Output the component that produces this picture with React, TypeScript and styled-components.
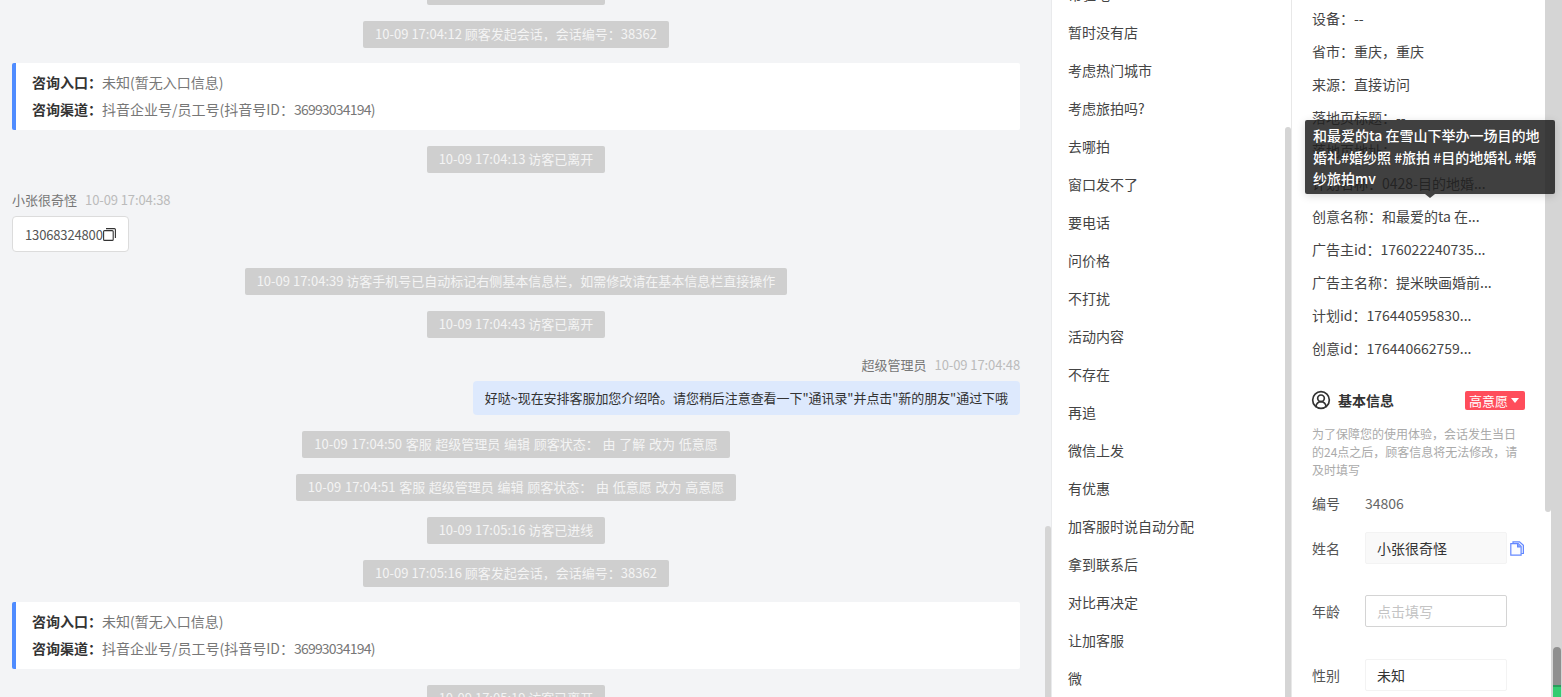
import React from "react";
import styled, { createGlobalStyle } from "styled-components";
import { CircleUserRound } from "lucide-react";

const Global = createGlobalStyle`
  html, body { margin: 0; padding: 0; background: #f3f4f6; overflow: hidden; }
  * { box-sizing: border-box; }
  body { font-family: "Noto Sans CJK SC", "Noto Sans", sans-serif; font-size: 14px; color: #333; }
`;

const Page = styled.div`
  position: relative; display: flex; width: 1562px; height: 697px; overflow: hidden; background: #f3f4f6;
`;
const Chat = styled.main`
  flex: 0 0 1045px; height: 719px; overflow: hidden; padding: 0 25px 0 12px;
  display: flex; flex-direction: column; gap: 16px; margin-top: -22px;
`;
const Notice = styled.div<{ $wide?: boolean }>`
  align-self: center; height: 27px; padding: 0 12px; line-height: 26px; flex: none;
  background: #cfcfcf; color: #f4f4f4; border-radius: 2px; white-space: nowrap; font-size: 13px;
  word-spacing: ${p => p.$wide ? "0.8px" : "0"};
`;
const Card = styled.div`
  flex: none; height: 67px; background: #fff; border-left: 4px solid #4f8cff; border-radius: 2px;
  padding: 6px 16px 8px; display: flex; flex-direction: column; justify-content: center; gap: 5px; margin: -1px 0 0;
`;
const CardLine = styled.div`
  line-height: 22px; color: #777; font-size: 14px; white-space: nowrap;
  b { color: #333; font-weight: 700; }
`;
const Digits = styled.span`letter-spacing: -0.8px;`;
const Message = styled.div<{ $mine?: boolean }>`
  flex: none; display: flex; flex-direction: column; gap: 7px; align-items: ${p => p.$mine ? "flex-end" : "flex-start"};
  margin-top: 1px;
`;
const Meta = styled.div`
  line-height: 19px; color: #777; font-size: 13px; white-space: nowrap;
  span { color: #bbb; margin-left: 8px; font-size: 13px; letter-spacing: -0.1px; }
`;
const PhoneBubble = styled.div`
  display: flex; align-items: center; height: 36px; padding: 0 12px; background: #fff;
  border: 1px solid #dcdcdc; border-radius: 4px; color: #555; font-size: 13px; letter-spacing: -0.15px;
`;
const TextBubble = styled.div`
  height: 34px; line-height: 34px; padding: 0 12px; background: #dde9fd; color: #333; border-radius: 4px;
  font-size: 13px; white-space: nowrap; letter-spacing: -0.06px;
`;
const ScrollBar = styled.div<{ $top?: number; $h?: number }>`
  flex: 0 0 6px; align-self: flex-start; margin-top: ${p => p.$top ?? 0}px; height: ${p => p.$h ?? 697}px;
  background: #d5d5d5; border-radius: 3px;
`;
const Gutter = styled.div`flex: 0 0 1px; background: #e9eaec;`;
const Middle = styled.section`
  flex: 0 0 240px; height: 697px; display: flex; background: #fff; border-right: 1px solid #e8e8e8;
`;
const Replies = styled.ul`
  flex: 1; list-style: none; margin: -25px 0 0; padding: 0 0 0 16px; overflow: hidden;
`;
const Reply = styled.li`height: 38px; line-height: 38px; color: #444; font-size: 14px; white-space: nowrap;`;
const Right = styled.section`flex: 0 0 259px; height: 697px; display: flex; background: #fff;`;
const Info = styled.div`flex: 1; padding: 2px 20px 0; overflow: hidden;`;
const Row = styled.div`height: 33px; line-height: 33px; color: #444; font-size: 14px; white-space: nowrap;`;
const Header = styled.div`
  display: flex; align-items: center; height: 20px; margin-top: 25px;
  svg { margin-left: -1px; margin-right: -1px; }
`;
const Title = styled.h3`margin: 0 0 0 8px; flex: 1; font-size: 14px; font-weight: 700; color: #333;`;
const Tag = styled.div`
  width: 60px; height: 19px; background: #ff4d5b; color: #fff; border-radius: 2px; line-height: 19px; font-size: 13px;
  display: flex; align-items: center; padding-left: 4px; gap: 3px;
  &::after { content: ""; border: 4px solid transparent; border-top: 5px solid #fff; border-bottom: 0; }
`;
const Tip = styled.p`margin: 15px 0 0; width: 212px; font-size: 12px; line-height: 18px; color: #aaa;`;
const Line = styled.div<{ $gap: number }>`display: flex; align-items: center; font-size: 14px; margin-top: ${p => p.$gap}px;`;
const Label = styled.div`flex: 0 0 53px; color: #555;`;
const Value = styled.div`color: #666; line-height: 20px;`;
const Field = styled.div<{ $kind: "filled" | "empty" | "plain" }>`
  width: 142px; height: 32px; line-height: 30px; padding: 0 11px; border-radius: 2px; font-size: 14px;
  background: ${p => p.$kind === "filled" ? "#f9f9f9" : "#fff"};
  border: 1px solid ${p => p.$kind === "empty" ? "#d4d4d4" : "#f3f3f3"};
  color: ${p => p.$kind === "empty" ? "#c4c4c4" : "#333"};
`;
const CopyBox = styled.div`margin-left: 3px; display: flex;`;
const Outer = styled.div`
  flex: 0 0 11px; height: 697px; background: #d5d5d5; display: flex; flex-direction: column; justify-content: flex-end; align-items: center;
`;
const OuterThumb = styled.div`
  width: 8px; height: 50px; border-radius: 4px 4px 0 0; overflow: hidden;
  background: linear-gradient(#8f8f8f 0 38px, #2a9d5c 38px 40px, #34cc70 40px);
`;
const Tooltip = styled.div`
  position: absolute; left: 1305px; top: 120px; width: 250px; height: 74px; padding: 5px 8px;
  background: rgba(30,30,30,.85); color: #fff; border-radius: 2px; font-size: 14px; line-height: 21.5px; font-weight: 500;
  box-shadow: 0 2px 8px rgba(0,0,0,.15);
  &::after { content: ""; position: absolute; left: 120px; bottom: -4px; border: 5px solid transparent; border-top: 4px solid #404040; border-bottom: 0; }
`;

const Entry = () => (
  <Card>
    <CardLine><b>咨询入口：</b>未知(暂无入口信息)</CardLine>
    <CardLine><b>咨询渠道：</b>抖音企业号/员工号(抖音号ID：<Digits>36993034194)</Digits></CardLine>
  </Card>
);

const DupIcon = () => (
  <svg width="13" height="13" viewBox="0 0 13 13" fill="none" stroke="#333" strokeWidth="1.1">
    <rect x="0.6" y="2.6" width="9.6" height="9.8" rx="1" />
    <path d="M3 .6h8.4a1 1 0 0 1 1 1V10" />
  </svg>
);
const BlueCopy = () => (
  <svg width="14" height="15" viewBox="0 0 14 15" fill="none" stroke="#6488ff" strokeWidth="1.2">
    <path d="M3 2V.8h6.5l3.9 3.4V12.5H11" fill="#eef2ff" />
    <path d="M.8 2.6h7.4l2.9 3v8.6H.8z" fill="#fbfcff" />
    <path d="M7.6 2.8v3.2h3.2" fill="#8aa6ff" />
  </svg>
);

const replies = ["常驻地","暂时没有店","考虑热门城市","考虑旅拍吗?","去哪拍","窗口发不了","要电话","问价格","不打扰","活动内容","不存在","再追","微信上发","有优惠","加客服时说自动分配","拿到联系后","对比再决定","让加客服","微"];
const rows = ["设备：--","省市：重庆，重庆","来源：直接访问","落地页标题：--","落地页地址：","计划名称：0428-目的地婚...","创意名称：和最爱的ta 在...","广告主id：176022240735...","广告主名称：提米映画婚前...","计划id：176440595830...","创意id：176440662759..."];

export default function App() {
  return (
    <Page>
      <Global />
      <Chat>
        <Notice>10-09 17:04:11 访客已进线</Notice>
        <Notice>10-09 17:04:12 顾客发起会话，会话编号：38362</Notice>
        <Entry />
        <Notice>10-09 17:04:13 访客已离开</Notice>
        <Message>
          <Meta>小张很奇怪<span>10-09 17:04:38</span></Meta>
          <PhoneBubble>13068324800<DupIcon /></PhoneBubble>
        </Message>
        <Notice>10-09 17:04:39 访客手机号已自动标记右侧基本信息栏，如需修改请在基本信息栏直接操作</Notice>
        <Notice>10-09 17:04:43 访客已离开</Notice>
        <Message $mine>
          <Meta>超级管理员<span>10-09 17:04:48</span></Meta>
          <TextBubble>好哒~现在安排客服加您介绍哈。请您稍后注意查看一下"通讯录"并点击"新的朋友"通过下哦</TextBubble>
        </Message>
        <Notice $wide>10-09 17:04:50 客服 超级管理员 编辑 顾客状态： 由 了解 改为 低意愿</Notice>
        <Notice $wide>10-09 17:04:51 客服 超级管理员 编辑 顾客状态： 由 低意愿 改为 高意愿</Notice>
        <Notice>10-09 17:05:16 访客已进线</Notice>
        <Notice>10-09 17:05:16 顾客发起会话，会话编号：38362</Notice>
        <Entry />
        <Notice>10-09 17:05:19 访客已离开</Notice>
      </Chat>
      <ScrollBar $top={526} $h={180} />
      <Gutter />
      <Middle>
        <Replies>{replies.map(r => <Reply key={r}>{r}</Reply>)}</Replies>
        <ScrollBar $top={127} $h={580} />
      </Middle>
      <Right>
        <Info>
          {rows.map(r => <Row key={r}>{r}</Row>)}
          <Header>
            <CircleUserRound size={20} color="#333" strokeWidth={2} />
            <Title>基本信息</Title>
            <Tag>高意愿</Tag>
          </Header>
          <Tip>为了保障您的使用体验，会话发生当日的24点之后，顾客信息将无法修改，请及时填写</Tip>
          <Line $gap={14}><Label>编号</Label><Value>34806</Value></Line>
          <Line $gap={19}><Label>姓名</Label><Field $kind="filled">小张很奇怪</Field><CopyBox><BlueCopy /></CopyBox></Line>
          <Line $gap={31}><Label>年龄</Label><Field $kind="empty">点击填写</Field></Line>
          <Line $gap={32}><Label>性别</Label><Field $kind="plain">未知</Field></Line>
        </Info>
        <ScrollBar $top={-8} $h={520} />
      </Right>
      <Outer><OuterThumb /></Outer>
      <Tooltip>和最爱的ta 在雪山下举办一场目的地婚礼#婚纱照 #旅拍 #目的地婚礼 #婚纱旅拍mv</Tooltip>
    </Page>
  );
}
